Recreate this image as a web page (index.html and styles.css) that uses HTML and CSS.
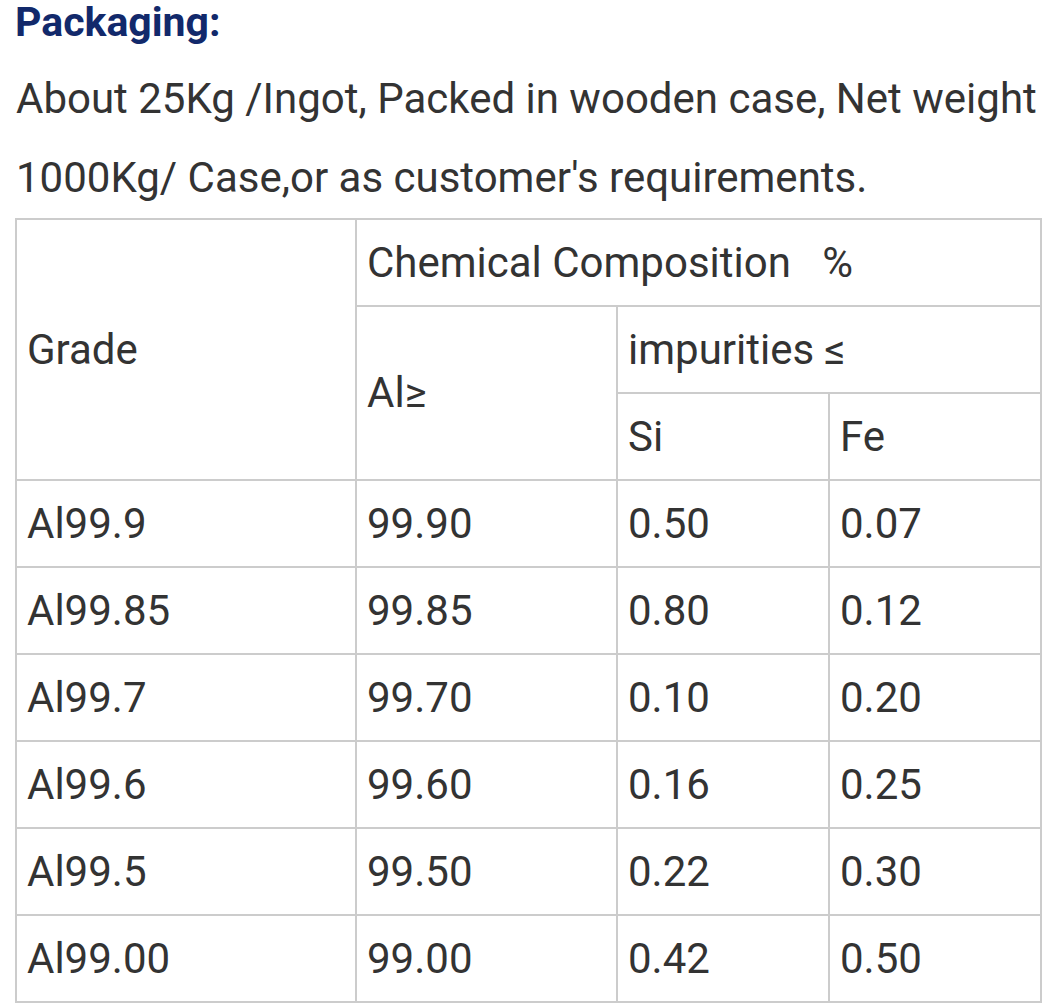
FILE: index.html
```html
<!DOCTYPE html>
<html>
<head>
<meta charset="utf-8">
<link rel="stylesheet" href="styles.css">
</head>
<body>
<div class="page">
  <h2 class="title">Packaging:</h2>
  <p class="desc">About 25Kg /Ingot, Packed in wooden case, Net weight 1000Kg/ Case,or as customer's requirements.</p>
  <table class="spec">
    <colgroup>
      <col class="c1"><col class="c2"><col class="c3"><col class="c4">
    </colgroup>
    <tr>
      <td rowspan="3">Grade</td>
      <td colspan="3">Chemical Composition&nbsp;&nbsp;&nbsp;%</td>
    </tr>
    <tr>
      <td rowspan="2">Al≥</td>
      <td colspan="2">impurities ≤</td>
    </tr>
    <tr>
      <td>Si</td>
      <td>Fe</td>
    </tr>
    <tr><td>Al99.9</td><td>99.90</td><td>0.50</td><td>0.07</td></tr>
    <tr><td>Al99.85</td><td>99.85</td><td>0.80</td><td>0.12</td></tr>
    <tr><td>Al99.7</td><td>99.70</td><td>0.10</td><td>0.20</td></tr>
    <tr><td>Al99.6</td><td>99.60</td><td>0.16</td><td>0.25</td></tr>
    <tr><td>Al99.5</td><td>99.50</td><td>0.22</td><td>0.30</td></tr>
    <tr><td>Al99.00</td><td>99.00</td><td>0.42</td><td>0.50</td></tr>
  </table>
</div>
</body>
</html>
```

FILE: styles.css
```css
html, body {
  margin: 0;
  padding: 0;
  background: #fff;
}
.page {
  padding: 0 6px 0 15px;
  font-family: Roboto, "Liberation Sans", sans-serif;
  color: #333;
}
.title {
  margin: 0;
  padding-top: 4px;
  font-size: 41px;
  line-height: 36px;
  font-weight: 700;
  color: #12296b;
}
.desc {
  margin: 19px 0 1px 0;
  font-size: 42px;
  line-height: 79px;
  padding-left: 1px;
}
.spec {
  border-collapse: collapse;
  table-layout: fixed;
  width: 1026px;
  font-size: 42px;
}
.c1 { width: 340px; }
.c2 { width: 261px; }
.c3 { width: 212px; }
.c4 { width: 212px; }
.spec td {
  border: 2px solid #ccc;
  height: 85px;
  padding: 0 10px;
  vertical-align: middle;
  line-height: 48px;
  white-space: nowrap;
}
```
